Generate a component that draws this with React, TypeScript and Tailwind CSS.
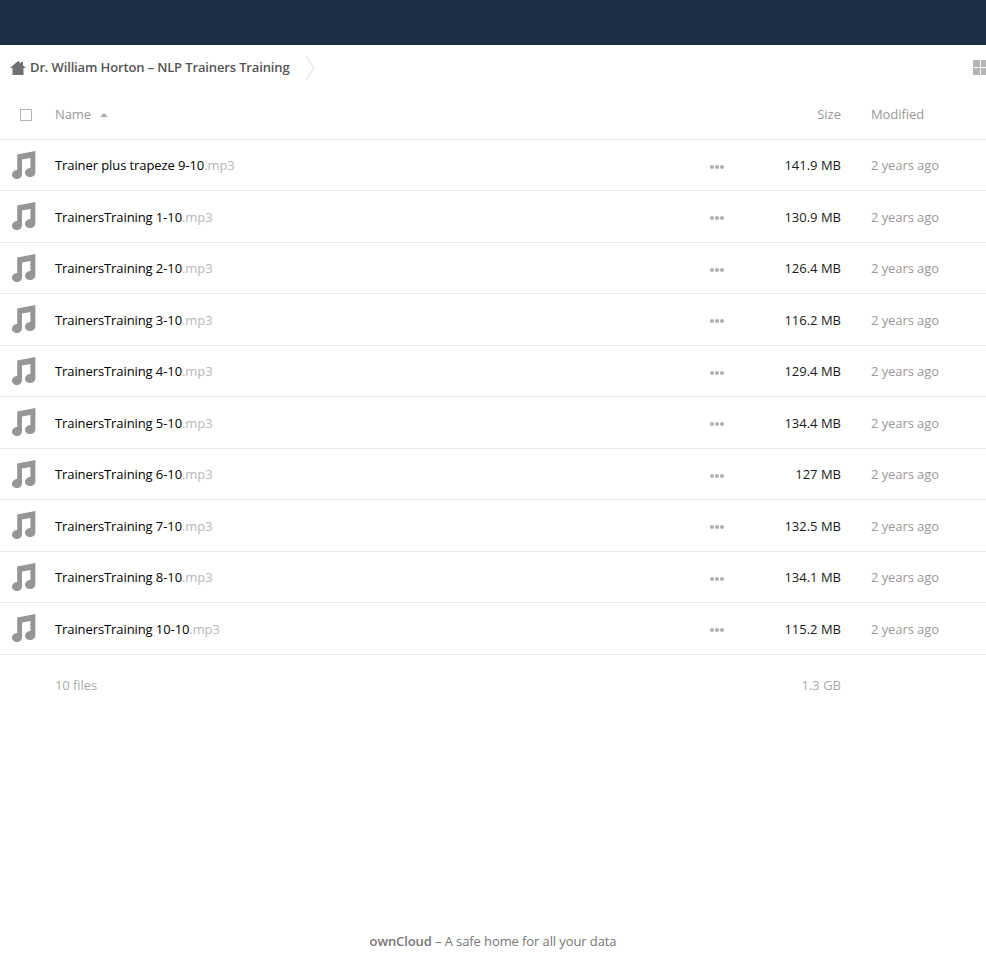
const files = [
  { name: "Trainer plus trapeze 9-10", size: "141.9 MB" },
  { name: "TrainersTraining 1-10", size: "130.9 MB" },
  { name: "TrainersTraining 2-10", size: "126.4 MB" },
  { name: "TrainersTraining 3-10", size: "116.2 MB" },
  { name: "TrainersTraining 4-10", size: "129.4 MB" },
  { name: "TrainersTraining 5-10", size: "134.4 MB" },
  { name: "TrainersTraining 6-10", size: "127 MB" },
  { name: "TrainersTraining 7-10", size: "132.5 MB" },
  { name: "TrainersTraining 8-10", size: "134.1 MB" },
  { name: "TrainersTraining 10-10", size: "115.2 MB" },
];

function MusicIcon() {
  return (
    <svg width="24" height="28" viewBox="0 0 24 28" className="mt-[-2px] shrink-0">
      <path
        fill="#969696"
        d="M5.2 3.4 L23.4 0 V21 C23.4 24 21 26 18 26 C15 26 13 24.2 13 22 C13 19.2 15.6 17 18.3 17 L18.4 17 V7 L10 8.6 V23 C10 26 7.6 28 5 28 C2.2 28 0 26.2 0 24 C0 21.2 2.4 19 5.2 19 Z"
      />
    </svg>
  );
}

function HomeIcon() {
  return (
    <svg width="16" height="14" viewBox="0 0 16 14">
      <path fill="#707070" d="M8 0 L11 2.6 V1 H13 V4.4 L16 7 H13.5 V14 H2.5 V7 H0 Z" />
    </svg>
  );
}

function Dots() {
  return (
    <div className="flex gap-[1px]">
      <span className="size-[4px] rounded-full bg-[#b0b0b0]" />
      <span className="size-[4px] rounded-full bg-[#b0b0b0]" />
      <span className="size-[4px] rounded-full bg-[#b0b0b0]" />
    </div>
  );
}

function FileRow({ name, size }: { name: string; size: string }) {
  return (
    <div className="flex h-[51.5px] items-center border-b border-[#eaeaea] pt-[2px]">
      <div className="flex w-[55px] pl-[12px]">
        <MusicIcon />
      </div>
      <div className="flex-1 tracking-[-0.09px] text-black">
        {name}
        <span className="text-[#b8b8b8]">.mp3</span>
      </div>
      <div className="mt-[2px] ml-[1px] w-[69px]">
        <Dots />
      </div>
      <div className="w-[62px] text-right text-[#1a1a1a]">{size}</div>
      <div className="ml-[30px] w-[115px] tracking-[-0.08px] text-[#999]">2 years ago</div>
    </div>
  );
}

export default function App() {
  return (
    <div className="flex min-h-[971px] flex-col bg-white font-['Open_Sans',sans-serif] text-[13px]">
      <div className="h-[45px] bg-[#1d2d44]" />
      <div className="flex h-[44px] items-center overflow-hidden pt-[1px] pl-[10px]">
        <HomeIcon />
        <span className="ml-[4px] font-semibold tracking-[-0.14px] text-[#555]">
          Dr. William Horton – NLP Trainers Training
        </span>
        <svg width="10" height="26" viewBox="0 0 10 26" className="ml-[16px]">
          <path d="M1 1 L9 13 L1 25" fill="none" stroke="#dddddd" />
        </svg>
        <div className="mr-[-2px] ml-auto grid grid-cols-2 gap-[1px]">
          <span className="size-[7px] bg-[#b5b5b5]" />
          <span className="size-[7px] bg-[#b5b5b5]" />
          <span className="size-[7px] bg-[#b5b5b5]" />
          <span className="size-[7px] bg-[#b5b5b5]" />
        </div>
      </div>
      <div className="flex h-[50.5px] items-center border-b border-[#eaeaea] pt-[2px] text-[#999]">
        <div className="w-[55px] pl-[20px]">
          <div className="size-[12px] border border-[#b4b4b4]" />
        </div>
        <div className="flex flex-1 items-center tracking-[-0.08px]">
          Name
          <svg width="8" height="4" viewBox="0 0 8 4" className="ml-[9px]">
            <path d="M4 0 L8 4 H0 Z" fill="#aaaaaa" />
          </svg>
        </div>
        <div className="w-[62px] text-right">Size</div>
        <div className="ml-[30px] w-[115px] tracking-[-0.08px]">Modified</div>
      </div>
      <div>
        {files.map((file) => (
          <FileRow key={file.name} name={file.name} size={file.size} />
        ))}
      </div>
      <div className="flex h-[61px] items-center pt-[2px] text-[#aaa]">
        <div className="flex-1 pl-[55px] tracking-[-0.08px]">10 files</div>
        <div className="w-[62px] text-right">1.3 GB</div>
        <div className="ml-[30px] w-[115px]" />
      </div>
      <div className="mt-[216px] text-center tracking-[-0.1px] text-[#777]">
        <span className="font-semibold">ownCloud</span> – A safe home for all your data
      </div>
    </div>
  );
}
